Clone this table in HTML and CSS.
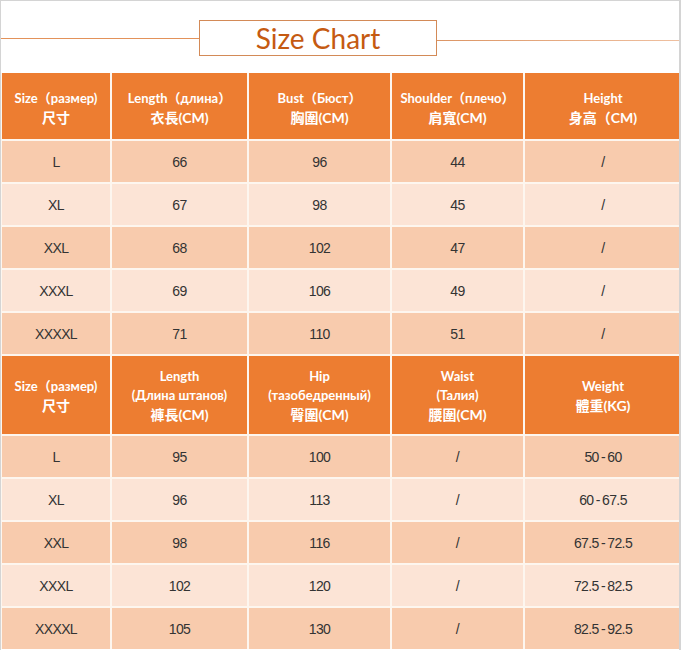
FILE: index.html
```html
<!DOCTYPE html>
<html>
<head>
<meta charset="utf-8">
<link rel="stylesheet" href="styles.css">
</head>
<body>
<div class="page">
  <div class="title-row">
    <div class="line line-left"></div>
    <div class="title-box">Size Chart</div>
    <div class="line line-right"></div>
  </div>
  <div class="grid">
    <div class="hd hd1"><span>Size（размер)</span><span class="cjk">尺寸</span></div>
    <div class="hd hd1"><span>Length（длина）</span><span class="cjk">衣長(CM)</span></div>
    <div class="hd hd1"><span>Bust（Бюст）</span><span class="cjk">胸圍(CM)</span></div>
    <div class="hd hd1"><span>Shoulder（плечо）</span><span class="cjk">肩寬(CM)</span></div>
    <div class="hd hd1"><span>Height</span><span class="cjk">身高（CM)</span></div>

    <div class="c a">L</div><div class="c a">66</div><div class="c a">96</div><div class="c a">44</div><div class="c a">/</div>
    <div class="c b">XL</div><div class="c b">67</div><div class="c b">98</div><div class="c b">45</div><div class="c b">/</div>
    <div class="c a">XXL</div><div class="c a">68</div><div class="c a">102</div><div class="c a">47</div><div class="c a">/</div>
    <div class="c b">XXXL</div><div class="c b">69</div><div class="c b">106</div><div class="c b">49</div><div class="c b">/</div>
    <div class="c a">XXXXL</div><div class="c a">71</div><div class="c a">110</div><div class="c a">51</div><div class="c a">/</div>

    <div class="hd hd2"><span>Size（размер)</span><span class="cjk">尺寸</span></div>
    <div class="hd hd2"><span>Length</span><span>(Длина штанов)</span><span class="cjk">褲長(CM)</span></div>
    <div class="hd hd2"><span>Hip</span><span>(тазобедренный)</span><span class="cjk">臀圍(CM)</span></div>
    <div class="hd hd2"><span>Waist</span><span>(Талия)</span><span class="cjk">腰圍(CM)</span></div>
    <div class="hd hd2"><span>Weight</span><span class="cjk">體重(KG)</span></div>

    <div class="c a">L</div><div class="c a">95</div><div class="c a">100</div><div class="c a">/</div><div class="c a">50&#8201;-&#8201;60</div>
    <div class="c b">XL</div><div class="c b">96</div><div class="c b">113</div><div class="c b">/</div><div class="c b">60&#8201;-&#8201;67.5</div>
    <div class="c a">XXL</div><div class="c a">98</div><div class="c a">116</div><div class="c a">/</div><div class="c a">67.5&#8201;-&#8201;72.5</div>
    <div class="c b">XXXL</div><div class="c b">102</div><div class="c b">120</div><div class="c b">/</div><div class="c b">72.5&#8201;-&#8201;82.5</div>
    <div class="c a">XXXXL</div><div class="c a">105</div><div class="c a">130</div><div class="c a">/</div><div class="c a">82.5&#8201;-&#8201;92.5</div>
  </div>
</div>
</body>
</html>
```
FILE: styles.css
```css
html, body {
  margin: 0;
  padding: 0;
  background: #ffffff;
}
.page {
  width: 681px;
  height: 650px;
  border-top: 1px solid #d4d4d4;
  border-left: 1px solid #d4d4d4;
  border-right: 2px solid #d4d4d4;
  box-sizing: border-box;
  overflow: hidden;
}
.title-row {
  display: flex;
  align-items: center;
  height: 72px;
}
.line {
  height: 1px;
  background: #e3925a;
}
.line-left {
  width: 198px;
  margin-top: 3px;
}
.line-right {
  flex: 1;
  margin-top: 7px;
  background: linear-gradient(to right, #dc9564, #efc0a0);
}
.title-box {
  width: 236px;
  height: 34px;
  border: 1px solid #d38a57;
  display: flex;
  align-items: center;
  justify-content: center;
  font-family: Lato, "Open Sans", sans-serif;
  font-size: 28px;
  color: #c55a11;
  margin-top: 1px;
}
.grid {
  display: grid;
  grid-template-columns: 108px 135px 141px 131px 156px;
  grid-template-rows: 66px repeat(5, 41px) 78px repeat(5, 41px);
  gap: 2px;
  padding-left: 1px;
  background: #fdf6ef;
}
.hd {
  background: #ed7d31;
  color: #ffffff;
  font-family: Lato, "Noto Sans CJK SC", sans-serif;
  font-weight: bold;
  font-size: 13px;
  display: flex;
  flex-direction: column;
  align-items: center;
  justify-content: center;
  line-height: 19px;
  white-space: nowrap;
}
.hd1 {
  padding-top: 3px;
}
.hd2 {
  padding-top: 1px;
}
.cjk {
  font-size: 14px;
}
.c {
  display: flex;
  align-items: center;
  justify-content: center;
  font-family: "Liberation Sans", Arial, sans-serif;
  font-size: 14px;
  letter-spacing: -0.6px;
  color: #333333;
}
.a {
  background: #f8cbad;
}
.b {
  background: #fce4d6;
}
```
